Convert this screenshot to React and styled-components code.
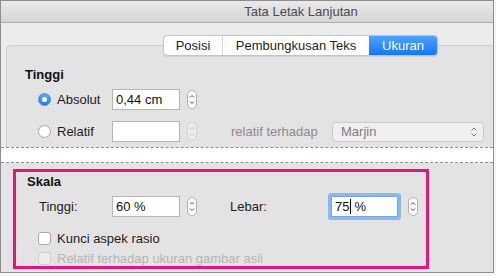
import React from "react";
import styled, { createGlobalStyle, css } from "styled-components";

const Global = createGlobalStyle`
  html, body { margin: 0; padding: 0; background: #f4f4f4; }
  body { font-family: "Liberation Sans", Arial, sans-serif; font-size: 13px; color: #1d1d1d; }
`;

const Window = styled.div`
  width: 492px;
  height: 271px;
  border: 1px solid #8e8e8e;
  background: #ececec;
  display: flex;
  flex-direction: column;
  overflow: hidden;
`;

const TitleBar = styled.div`
  height: 21px;
  border-bottom: 1px solid #ababab;
  background: linear-gradient(#e9e9e9, #d5d5d5);
  display: flex;
  align-items: center;
  justify-content: center;
  padding-left: 108px;
  color: #4b4b4b;
  font-size: 13px;
  line-height: 21px;
`;

const TabsRow = styled.div`
  display: flex;
  padding: 12px 0 0 162px;
  position: relative;
  z-index: 2;
`;

const Segmented = styled.div`
  display: flex;
  height: 19px;
  border: 1px solid #c4c4c4;
  border-radius: 4px;
  background: #fff;
  overflow: hidden;
  box-shadow: 0 0.5px 1px rgba(0,0,0,0.08);
`;

const Segment = styled.div`
  width: ${(p) => p.$w}px;
  display: flex;
  align-items: center;
  justify-content: center;
  font-size: 13px;
  line-height: 19px;
  color: #1f1f1f;
  border-left: ${(p) => (p.$first ? "none" : "1px solid #d6d6d6")};
  ${(p) =>
    p.$active &&
    css`
      border-left: none;
      background: linear-gradient(#4ea3fd, #1477f8);
      color: #fff;
    `}
`;

const Panel = styled.div`
  margin: -11px 0 0 5px;
  background: #e3e3e3;
  border: 1px solid #cfcfcf;
  border-right: none;
  border-bottom: none;
  border-radius: 5px 0 0 0;
  padding: 21px 0 0 18px;
  height: 80px;
`;

const Heading = styled.div`
  font-weight: bold;
  font-size: 13px;
  line-height: 16px;
  color: #111;
`;

const Rows = styled.div`
  display: flex;
  flex-direction: column;
  gap: 11px;
  margin-top: 6px;
  padding-left: 13px;
`;

const Row = styled.div`
  display: flex;
  align-items: center;
  height: 21px;
`;

const OptionLabel = styled.label`
  width: 74px;
  display: flex;
  align-items: center;
  gap: 6px;
  color: ${(p) => (p.$disabled ? "#b4b4b4" : "#1d1d1d")};
  font-size: 13px;
`;

const Radio = styled.span`
  width: 13px;
  height: 13px;
  border-radius: 50%;
  box-sizing: border-box;
  display: flex;
  align-items: center;
  justify-content: center;
  ${(p) =>
    p.$on
      ? css`
          background: linear-gradient(#5aaafd, #1b7ef8);
          border: 1px solid #3a8ef5;
          &::after {
            content: "";
            width: 5px;
            height: 5px;
            border-radius: 50%;
            background: #fff;
          }
        `
      : css`
          background: #fff;
          border: 1px solid #a9a9a9;
        `}
`;

const Box = styled.span`
  width: 13px;
  height: 13px;
  box-sizing: border-box;
  border-radius: 3px;
  background: ${(p) => (p.$disabled ? "#ececec" : "#fff")};
  border: 1px solid ${(p) => (p.$disabled ? "#cdcdcd" : "#a9a9a9")};
`;

const Input = styled.div`
  width: ${(p) => p.$w || 68}px;
  height: 21px;
  box-sizing: border-box;
  border: 1px solid #b6b6b6;
  background: #fff;
  display: flex;
  align-items: center;
  padding-left: 3px;
  font-size: 13px;
  color: #111;
  ${(p) =>
    p.$focus &&
    css`
      border: 1px solid #7aa6dd;
      box-shadow: 0 0 0 3px #8ab8f0;
      border-radius: 1px;
    `}
`;

const Caret = styled.span`
  display: inline-block;
  width: 1px;
  height: 15px;
  background: #000;
  margin: 0 3px 0 1px;
`;

const StepperWrap = styled.div`
  margin-left: ${(p) => p.$ml || 7}px;
  width: 10px;
  height: 19px;
  box-sizing: border-box;
  border: 1px solid ${(p) => (p.$disabled ? "#d2d2d2" : "#b1b1b1")};
  border-radius: 5px;
  background: ${(p) => (p.$disabled ? "#ececec" : "#fff")};
  display: flex;
`;

const Stepper = ({ disabled, ml }) => (
  <StepperWrap $disabled={disabled} $ml={ml}>
    <svg width="8" height="17" viewBox="0 0 8 17">
      <path
        d="M2 6.5 L4 4.5 L6 6.5 M2 10.5 L4 12.5 L6 10.5"
        fill="none"
        stroke={disabled ? "#bdbdbd" : "#4a4a4a"}
        strokeWidth="1"
      />
    </svg>
  </StepperWrap>
);

const GrayText = styled.span`
  margin-left: 34px;
  width: 101px;
  color: #8b8b8b;
  font-size: 13px;
`;

const Select = styled.div`
  width: 152px;
  height: 20px;
  box-sizing: border-box;
  border: 1px solid #cbcbcb;
  border-radius: 4px;
  background: #efefef;
  display: flex;
  align-items: center;
  justify-content: space-between;
  padding: 0 5px 0 8px;
  color: #7e7e7e;
  font-size: 13px;
`;

const Cut = styled.div`
  height: 14px;
  background: #fff;
  border-top: 1px dashed #8d8d8d;
  border-bottom: 1px dashed #8d8d8d;
`;

const Lower = styled.div`
  flex: 1;
  background: #e3e3e3;
  padding: 6px 0 0 12px;
`;

const Highlight = styled.div`
  box-sizing: border-box;
  width: 416px;
  height: 100px;
  border: 3px solid #e5137f;
  padding: 2px 0 0 11px;
`;

const ScaleRow = styled.div`
  display: flex;
  align-items: center;
  height: 21px;
  margin-top: 6px;
  padding-left: 12px;
`;

const FieldLabel = styled.span`
  width: ${(p) => p.$w}px;
  margin-left: ${(p) => p.$ml || 0}px;
  font-size: 13px;
  color: #1d1d1d;
`;

const Checks = styled.div`
  display: flex;
  flex-direction: column;
  gap: 7px;
  margin-top: 15px;
  padding-left: 11px;
`;

const CheckRow = styled.label`
  display: flex;
  align-items: center;
  gap: 6px;
  height: 13px;
  color: ${(p) => (p.$disabled ? "#b5b5b5" : "#1d1d1d")};
  font-size: 13px;
`;

const SelectChevron = () => (
  <svg width="8" height="12" viewBox="0 0 8 12">
    <path d="M1.5 4.5 L4 2 L6.5 4.5 M1.5 7.5 L4 10 L6.5 7.5" fill="none" stroke="#7b7b7b" strokeWidth="1" />
  </svg>
);

export default function App() {
  return (
    <>
      <Global />
      <Window>
        <TitleBar>Tata Letak Lanjutan</TitleBar>
        <TabsRow>
          <Segmented>
            <Segment $w={58} $first>Posisi</Segment>
            <Segment $w={146}>Pembungkusan Teks</Segment>
            <Segment $w={68} $active>Ukuran</Segment>
          </Segmented>
        </TabsRow>
        <Panel>
          <Heading>Tinggi</Heading>
          <Rows>
            <Row>
              <OptionLabel>
                <Radio $on />
                Absolut
              </OptionLabel>
              <Input>0,44 cm</Input>
              <Stepper />
            </Row>
            <Row>
              <OptionLabel>
                <Radio />
                Relatif
              </OptionLabel>
              <Input />
              <Stepper disabled />
              <GrayText>relatif terhadap</GrayText>
              <Select>
                Marjin
                <SelectChevron />
              </Select>
            </Row>
          </Rows>
        </Panel>
        <Cut />
        <Lower>
          <Highlight>
            <Heading>Skala</Heading>
            <ScaleRow>
              <FieldLabel $w={73}>Tinggi:</FieldLabel>
              <Input>60 %</Input>
              <Stepper />
              <FieldLabel $w={101} $ml={33}>Lebar:</FieldLabel>
              <Input $w={67} $focus>
                75<Caret />%
              </Input>
              <Stepper ml={10} />
            </ScaleRow>
            <Checks>
              <CheckRow>
                <Box />
                Kunci aspek rasio
              </CheckRow>
              <CheckRow $disabled>
                <Box $disabled />
                Relatif terhadap ukuran gambar asli
              </CheckRow>
            </Checks>
          </Highlight>
        </Lower>
      </Window>
    </>
  );
}
